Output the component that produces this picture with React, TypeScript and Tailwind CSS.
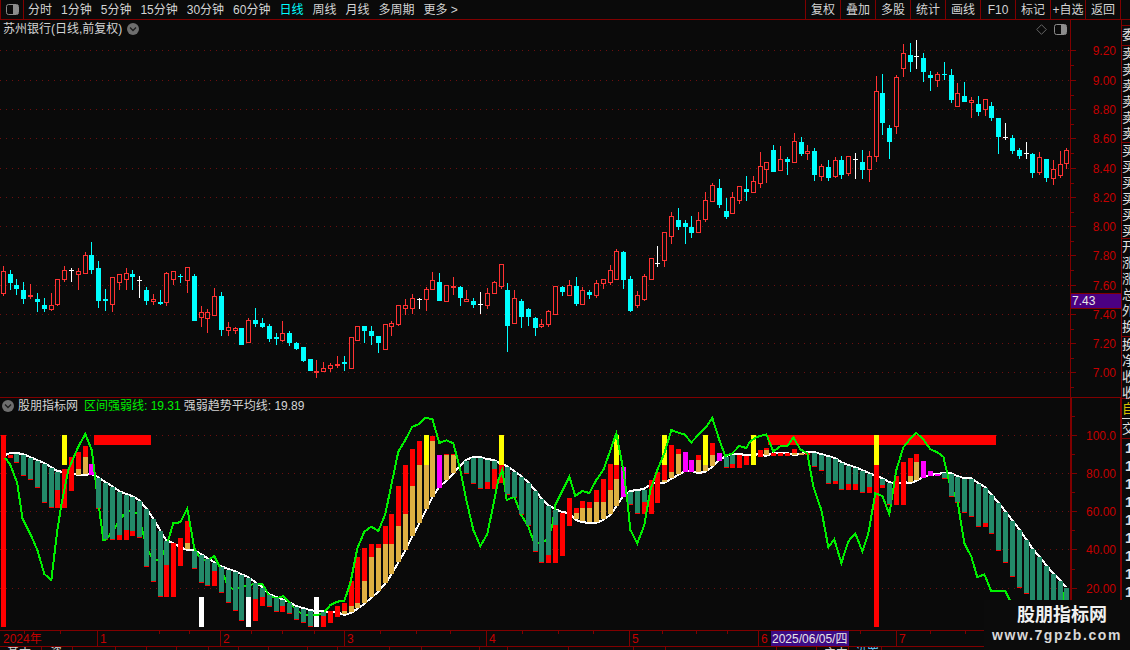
type Candle = [number, number, number, number, string]

// y values read from the picture at 3x, one block per crop
const candlesA: Candle[] = [
  [138,153,221,228,'r'],[150,162,189,210,'c'],[177,195,207,225,'c'],[186,210,237,252,'c'],[192,225,231,237,'r'],
  [219,237,246,276,'c'],[234,255,267,276,'c'],[219,255,270,273,'r'],[177,177,255,258,'r'],[138,150,180,186,'r'],
  [144,150,153,186,'w'],[144,153,165,210,'r'],[96,105,162,162,'r'],[66,105,150,162,'c'],[123,144,243,264,'c'],
  [207,237,243,273,'c'],[171,171,255,276,'r'],[162,162,189,210,'r'],[144,159,180,210,'r'],[150,162,171,210,'c'],
  [168,180,183,234,'w'],[201,210,243,255,'c'],[222,237,246,255,'r'],[210,246,252,255,'c'],[156,159,249,258,'r'],
  [153,153,180,195,'r'],[162,168,171,189,'c'],[141,141,183,219,'r'],[162,168,303,303,'c'],[258,276,294,321,'r'],
  [267,276,297,339,'r'],[204,228,288,288,'r'],[216,228,330,348,'c'],[306,321,333,348,'r'],[321,324,333,342,'r'],
  [324,324,375,375,'c'],[294,300,369,369,'r'],[264,300,312,321,'c'],[294,309,321,324,'c'],[312,318,357,366,'c'],
  [339,351,357,375,'c'],[303,339,363,366,'r'],[333,339,369,378,'c'],[366,369,387,390,'c'],[381,381,423,426,'c'],
  [417,417,453,453,'c'],[420,453,459,474,'r'],[426,444,456,456,'r'],[429,435,447,456,'r'],[408,432,438,444,'r'],
  [408,426,432,453,'c'],[351,351,447,447,'r'],[318,318,363,363,'r'],[318,318,333,369,'c'],[318,333,348,375,'c'],
  [348,348,369,399,'c'],[312,312,390,390,'r'],[303,309,321,348,'r'],[255,255,315,318,'r'],[237,255,267,285,'r'],
  [222,234,267,282,'r'],[234,237,240,267,'w'],[201,207,240,273,'r'],[156,180,210,210,'r'],[159,186,243,243,'c'],
  [195,195,246,246,'r'],[171,198,204,225,'r'],[198,201,234,258,'c'],[210,237,246,246,'r'],[234,243,255,264,'c'],
  [216,252,255,282,'w'],[204,219,258,267,'r'],[183,186,222,222,'r'],[132,132,201,207,'r'],[189,210,318,396,'c'],
  [210,234,312,312,'r'],[237,243,291,324,'c'],[264,267,291,318,'c'],[291,294,324,348,'c'],[297,312,321,324,'r'],
  [270,273,315,321,'r'],[198,198,285,285,'r'],[198,201,216,228,'c'],[180,195,228,228,'r'],[171,198,252,258,'c'],
  [201,210,255,255,'r'],[210,216,225,237,'c'],[180,189,228,234,'r'],[177,177,192,207,'r'],[135,150,189,195,'r'],
  [87,93,180,180,'r'],[93,96,180,207,'c'],[168,177,273,276,'c'],[213,225,258,264,'r'],[162,168,240,243,'r'],
  [114,114,180,180,'r'],[78,129,132,141,'w'],[36,36,123,141,'r'],
]
const candlesB: Candle[] = [
  [212,216,237,244,'r'],[208,220,227,230,'c'],[220,223,227,244,'c'],[216,227,233,238,'c'],[212,220,233,233,'r'],
  [192,200,220,222,'r'],[183,185,202,202,'r'],[179,188,205,208,'c'],[198,211,217,219,'c'],[192,197,214,214,'r'],
  [186,186,201,204,'r'],[176,189,192,201,'c'],
]
const candlesC: Candle[] = [
  [529,544,579,579,'r'],[456,498,552,564,'r'],[486,486,510,549,'r'],[435,450,516,516,'c'],[438,477,513,513,'r'],
  [471,477,486,525,'c'],[399,423,489,489,'r'],[411,426,462,468,'c'],[435,453,462,480,'r'],[444,453,525,543,'c'],
  [492,498,531,543,'r'],[480,501,534,543,'c'],[471,480,531,534,'r'],[468,480,525,537,'c'],[468,468,522,528,'r'],
  [459,477,480,537,'w'],[450,486,510,537,'c'],[453,468,510,546,'r'],[228,273,471,486,'r'],[222,279,369,405,'c'],
  [375,384,426,477,'c'],[225,231,381,402,'r'],[132,159,207,231,'r'],[129,165,186,216,'c'],[120,168,171,207,'w'],
  [159,174,216,246,'c'],[213,225,234,273,'c'],[216,222,243,261,'r'],[186,222,225,240,'c'],[207,225,300,309,'c'],
  [249,279,321,321,'r'],[246,288,306,306,'c'],[291,300,309,354,'r'],[288,312,336,348,'c'],[297,297,330,348,'r'],
  [306,318,354,363,'c'],[354,354,411,462,'c'],[369,411,414,420,'w'],[405,414,453,462,'c'],[444,450,468,477,'c'],
  [426,459,462,477,'w'],[459,462,519,534,'c'],[456,471,519,525,'r'],[477,477,534,546,'c'],[480,507,537,555,'r'],
  [453,492,528,534,'r'],[444,450,492,507,'r'],
]

const toPx = (list: Candle[], off: number, div: number): Candle[] =>
  list.map(([a, b, c, d, t]) => [Math.round(a / div + off), Math.round(b / div + off), Math.round(c / div + off), Math.round(d / div + off), t])

const candles: Candle[] = [...toPx(candlesA, 220, 3), ...candlesB, ...toPx(candlesC, 0, 3)]

// start y, then colour + end y. t teal, r red, o orange, m magenta, y yellow, w white, _ gap
const bars = [
  '136 r711','195 r204','192 t216 r219','195 t255 r258','204 t267 r270','213 t291 r294','222 t336 r339','234 t351 r354',
  '246 t300 r354','136 y225 _237 r354','201 r303','186 r237 o255','168 r201 o252','222 m255','264 t354 r357','279 t447 r450',
  '291 t447 r450','306 t435 r450','315 t420 r450','321 t423 r438','333 t441 r444','357 t528 r531','387 t573 r576','423 t618 r621',
  '453 t525 r621','459 r621','444 r528','393 r459 o477','483 t534 r537','495 t576 r579 _621 w711','507 t585 r588','519 t543 r588',
  '531 t606 r609','540 t636 r639','546 t660 r663','555 t690 r693','564 t621 w711','579 t627 r693','594 t621 r648','615 t648 r651',
  '624 t663 r666','630 t648 r666','639 t669 r672','651 t687 r690','657 t696 r699','663 t708 r711','621 w711','666 t678 r711',
  '663 r699','648 r681','639 r663 o672','573 r648 o666','501 r639 o654','474 r573 o639','462 r501 o621','462 r474 o603',
  '408 r462 o579','372 r462 o552','288 r408 o516','225 r372 o480','177 r288 o438','153 r225 o399','136 y225 o357','138 r153 o321',
  '195 m294','192 r195 o270','192 r195 o249','','213 t249 r252','204 t279 r282','204 t294 r297','210 t276 r297',
  '213 t237 r297','136 y225 r279','231 t312 r315','246 t321 r324','261 t372 r375','279 t405 r408','303 t483 r486','327 t516 r519',
  '348 t495 r519','360 t405 r519','369 r498','324 r408','354 r369 o387','333 r354 o393','336 r354 o396','300 r336 o396',
  '267 r336 o387','222 r300 o372','136 y225 r267 o348','231 m321','306 t342 r345','303 t369 r372','300 t336 r372','270 r372',
  '246 r339','136 y225 r270 o276','165 r246 o264','177 r192 o252','186 m246','210 m246','195 r210 o246','136 y225 o243',
  '159 r195 o228','189 m213','201 t231 r234','195 t222 r234','195 r234','198 r225','136 y225','180 r201',
  '174 r180 o195','189 r198','189 r198','189 r198','177 r189 o195','189 o195','189 r195','189 t228 r231',
  '195 t240 r243','201 t279 r282','207 t273 r282','219 t297 r300','228 t282 r300','234 t282 r300','243 t306 r309','252 t291 r309',
  '136 y225 r711','267 t285 r294','279 t342 r345','258 r345','216 r345','204 r258 o276','192 r216 o270','213 m264',
  '243 m258','252 m258','249 t264 r267','252 t318 r321','261 t336 r339','267 t366 r369','267 t378 r381','282 t408 r411',
  '294 t399 r411','315 t429 r432','339 t480 r483','366 t516 r519','393 t558 r561','420 t591 r594','450 t609 r612','477 t690 r693',
  '501 t690 r693','528 t690 r693','552 t690 r693','573 t690 r693','594 t690 r693',
]

const curve = [
  200,192,192,195,204,213,222,234,246,250,252,252,252,255,264,279,291,306,315,321,333,357,387,423,453,462,474,477,483,495,507,519,
  531,540,546,555,564,579,594,615,624,630,639,651,657,663,666,666,669,669,672,666,654,639,621,603,579,552,516,480,438,399,357,321,
  294,270,249,231,213,204,204,210,213,225,231,246,261,279,303,327,348,360,369,372,387,393,396,396,387,372,348,321,306,303,300,285,
  282,276,264,252,246,246,246,243,228,213,201,195,195,198,198,195,195,192,192,192,192,189,189,189,195,201,207,219,228,234,243,252,
  261,267,279,285,279,276,270,264,258,255,252,252,261,267,267,282,294,315,339,366,393,420,450,477,501,528,552,573,594,
]

const greenA = [[15,204],[30,222],[52,280],[67,384],[91,432],[112,480],[133,552],[154,570],[172,420],[185,340],[205,240],[235,170],[256,132],[275,180],[283,240],[290,300],[310,450],[316,451],[340,420],[370,375],[385,362],[415,370],[440,475],[460,510],[480,510],[499,470],[520,399],[541,397],[562,356],[583,475],[604,510],[625,510],[643,498],[664,540],[685,590],[706,600],[724,590],[745,585],[766,582],[787,582],[808,618],[829,625],[850,618],[870,640],[889,660],[910,675],[949,676],[970,670],[991,645],[1012,635],[1033,632],[1051,580],[1072,475],[1093,425]]
const greenB = [[4,410],[25,423],[46,372],[64,285],[85,185],[106,150],[127,110],[148,102],[166,84],[187,87],[208,159],[229,151],[250,160],[271,240],[289,330],[310,420],[331,468],[352,432],[373,330],[385,270],[397,240],[410,330],[433,320],[454,375],[475,410],[493,460],[514,460],[535,445],[547,405],[556,345],[598,260],[616,318],[637,303],[658,309],[679,270],[700,240],[718,190],[739,130],[760,240],[772,330],[781,420],[802,460],[823,405],[841,300],[862,240],[883,190],[904,120],[925,128],[943,133],[964,157],[985,135],[1006,114],[1027,84],[1048,150],[1066,198],[1087,190],[1108,168],[1129,174],[1140,155]]
const greenC = [[20,141],[49,133],[70,185],[91,169],[112,169],[130,142],[151,178],[172,190],[190,290],[214,360],[235,472],[253,448],[274,519],[295,454],[316,430],[337,484],[355,430],[376,310],[397,318],[418,372],[439,240],[460,172],[478,150],[499,129],[520,148],[541,178],[562,187],[580,200],[601,290],[622,330],[643,460],[664,500],[682,562],[703,553],[724,604],[745,604],[766,604],[785,640],[860,700],[925,680],[945,600]]

const greenPoints = [
  ...greenA.map(([x, y]) => `${x / 3},${y / 3 + 390}`),
  ...greenB.map(([x, y]) => `${x / 3 + 370},${y / 3 + 390}`),
  ...greenC.map(([x, y]) => `${x / 3 + 750},${y / 3 + 390}`),
].join(' ')

const barColor: Record<string, string> = { t: '#238a69', r: '#ff0000', o: '#deaf42', m: '#ff00ff', y: '#ffff00', w: '#ffffff' }

const colX = (i: number) => Math.floor(3.3 + 6.818 * i)
const zy = (z: number) => Math.round(z / 3) + 390

// the white line sits above teal bars and below orange ones
const curvePoints = curve.map((y, i) => `${colX(i)},${zy(y) + (bars[i].includes('o') ? 1 : -1)}`).join(' ')

const priceTicks = [
  ['9.20', 50], ['9.00', 80], ['8.80', 109], ['8.60', 138], ['8.40', 168], ['8.20', 197],
  ['8.00', 226], ['7.80', 255], ['7.60', 285], ['7.40', 314], ['7.20', 343], ['7.00', 372],
] as const
const indTicks = [['100.0', 435], ['80.00', 473], ['60.00', 511], ['40.00', 549], ['20.00', 588]] as const

const periods = ['分时', '1分钟', '5分钟', '15分钟', '30分钟', '60分钟', '日线', '周线', '月线', '多周期', '更多 >']
const tools = ['复权', '叠加', '多股', '统计', '画线', 'F10', '标记', '+自选', '返回']

const tabs = [
  { label: '基本', cls: 'w-[42px] pl-[7px]' }, { label: '资', cls: 'w-[31px] pl-[8px]' }, { label: '', cls: 'w-[43px]' },
  { label: '', cls: 'w-[31px]' }, { label: '', cls: 'w-[30px]' }, { label: '', cls: 'w-[32px]' }, { label: '', cls: 'w-[30px]' },
  { label: '', cls: 'w-[30px]' }, { label: '', cls: 'w-[39px]' }, { label: '', cls: 'w-[30px]' }, { label: '', cls: 'w-[52px]' },
  { label: '', cls: 'w-[32px]' }, { label: '', cls: 'w-[58px]' }, { label: '', cls: 'w-[28px]' }, { label: '', cls: 'w-[61px]' },
  { label: '', cls: 'w-[65px]' }, { label: '', cls: 'w-[32px]' }, { label: '', cls: 'w-[111px]' }, { label: '', cls: 'w-[40px]' },
  { label: '主力', cls: 'w-[32px] pl-[7px]' }, { label: '设置', cls: 'w-[33px] pl-[6px] text-[#66ccff]' },
]

function PanelIcon() {
  return (
    <svg width="13" height="11" viewBox="0 0 13 11">
      <rect x="0.5" y="0.5" width="12" height="10" rx="2" fill="#0a0a0a" stroke="#8c8c8c" />
      <rect x="7" y="1" width="5" height="9" fill="#8c8c8c" />
    </svg>
  )
}

function Chevron() {
  return (
    <svg width="12" height="12" viewBox="0 0 12 12">
      <circle cx="6" cy="6" r="6" fill="#6e6e6e" />
      <path d="M3 4.5 L6 7.5 L9 4.5" fill="none" stroke="#1c1c1c" strokeWidth="1.3" />
    </svg>
  )
}

function Candles() {
  return (
    <>
      {candles.map(([hi, top, bot, lo, t], i) => {
        const x = colX(i)
        const color = t === 'r' ? '#ff3232' : t === 'c' ? '#00ffff' : '#ffffff'
        const hollow = t === 'r' && bot - top >= 3
        const h = Math.max(bot - top, 1)
        return (
          <g key={i} shapeRendering="crispEdges">
            <rect x={x} y={hi} width="1" height={Math.max(top - hi, 0)} fill={color} />
            <rect x={x} y={bot} width="1" height={Math.max(lo - bot, 0)} fill={color} />
            {hollow ? (
              <rect x={x - 1.5} y={top + 0.5} width="4" height={h - 1} fill="#0a0a0a" stroke={color} />
            ) : (
              <rect x={x - 2} y={top} width="5" height={h} fill={color} />
            )}
          </g>
        )
      })}
    </>
  )
}

function Bars({ teal }: { teal: boolean }) {
  return (
    <>
      {bars.flatMap((bar, i) => {
        if (!bar) return []
        const parts = bar.split(' ')
        let y = Number(parts[0])
        return parts.slice(1).map((p, j) => {
          const key = p[0]
          const end = Number(p.slice(1))
          const from = y
          y = end
          if (key === '_' || (key === 't') !== teal) return null
          return <rect key={`${i}-${j}`} x={colX(i) - 2} y={zy(from)} width="5" height={zy(end) - zy(from)} fill={barColor[key]} />
        })
      })}
    </>
  )
}

function GridLines({ ys }: { ys: readonly number[] }) {
  return (
    <>
      {ys.map((y) => (
        <line key={y} x1="0" x2="1070" y1={y + 0.5} y2={y + 0.5} stroke="#6e0f0f" strokeDasharray="1 5" />
      ))}
    </>
  )
}

function PriceAxis() {
  return (
    <svg width="50" height="377" viewBox="1071 20 50 377" className="block">
      {priceTicks.map(([label, y]) => (
        <g key={label}>
          <rect x="1071" y={y} width="5" height="1" fill="#800000" />
          <rect x="1071" y={y + 15} width="3" height="1" fill="#800000" />
          <text x="1116" y={y + 5} textAnchor="end" fontSize="12" fill="#c40000">{label}</text>
        </g>
      ))}
    </svg>
  )
}

function IndicatorAxis() {
  return (
    <svg width="48" height="232" viewBox="1072 398 48 232" className="block">
      {indTicks.map(([label, y]) => (
        <g key={label}>
          <rect x="1072" y={y} width="5" height="1" fill="#800000" />
          <rect x="1072" y={y - 19} width="3" height="1" fill="#800000" />
          <text x="1116" y={y + 5} textAnchor="end" fontSize="12" fill="#c40000">{label}</text>
        </g>
      ))}
    </svg>
  )
}

function TimeAxis() {
  const months = [[97, '1'], [220, '2'], [344, '3'], [486, '4'], [629, '5'], [758, '6'], [896, '7']] as const
  const small = [24, 60, 159, 189, 251, 282, 314, 380, 416, 450, 522, 558, 593, 662, 696, 727, 800, 860, 930, 965]
  return (
    <svg width="1122" height="17" viewBox="0 630 1122 17" className="block">
      <rect x="0" y="630" width="1122" height="1" fill="#800000" />
      <rect x="0" y="646" width="1122" height="1" fill="#800000" />
      {small.map((x) => <rect key={x} x={x} y="631" width="1" height="3" fill="#800000" />)}
      <text x="3" y="643" fontSize="12" fill="#c40000">2024年</text>
      {months.map(([x, m]) => (
        <g key={m}>
          <rect x={x} y="631" width="1" height="15" fill="#800000" />
          <text x={x + 3} y="643" fontSize="12" fill="#c40000">{m}</text>
        </g>
      ))}
      <rect x="771" y="631" width="78" height="15" fill="#3d0b85" />
      <text x="772" y="643" fontSize="12" fill="#e8e8e8">2025/06/05/四</text>
    </svg>
  )
}

function StripRows({ chars, rowClass }: { chars: string; rowClass: string }) {
  return (
    <>
      {[...chars].map((c, i) => (
        <div key={i} className={rowClass}>{c}</div>
      ))}
    </>
  )
}

function RightStrip() {
  return (
    <div className="w-[8px] flex flex-col overflow-hidden text-[#e0e0e0] text-[13px] whitespace-nowrap">
      <div className="h-[6px] shrink-0 border-b border-[#800000]" />
      <div className="h-[20px] shrink-0 border-b border-[#800000] leading-[18px]">委</div>
      <div className="h-[97px] shrink-0 border-b border-[#800000]">
        <StripRows chars="卖卖卖卖卖卖" rowClass="h-[16px] leading-[16px]" />
      </div>
      <div className="h-[96px] shrink-0 border-b border-[#800000]">
        <StripRows chars="买买买买买买" rowClass="h-[16px] leading-[16px]" />
      </div>
      <div className="h-[98px] shrink-0 border-b border-[#800000]">
        <StripRows chars="开涨涨总外换" rowClass="h-[16px] leading-[16px]" />
      </div>
      <div className="h-[62px] shrink-0 border-b border-[#800000]">
        <StripRows chars="换净收收" rowClass="h-[16px] leading-[16px]" />
      </div>
      <div className="h-[20px] shrink-0 border-b border-[#d8d8d8] text-[#d8c000] leading-[20px]">自</div>
      <div className="h-[20px] shrink-0 border-b border-[#800000] leading-[19px]">交</div>
      <StripRows chars="111111111" rowClass="h-[18px] shrink-0 leading-[18px] pl-[3px] text-[15px] font-bold" />
    </div>
  )
}

export default function App() {
  return (
    <div className="relative w-[1130px] h-[650px] overflow-hidden flex flex-col bg-[#0a0a0a] text-[12px] text-[#d4d4d4] [font-family:'Liberation_Sans','Noto_Sans_CJK_SC',sans-serif]">
      {/* top toolbar */}
      <div className="h-[20px] shrink-0 flex items-center border-b border-[#800000]">
        <div className="w-[24px] h-full flex items-center justify-center border-x border-[#800000]">
          <PanelIcon />
        </div>
        <div className="flex items-center gap-[9px] ml-[4px]">
          {periods.map((p) => (
            <span key={p} className={p === '日线' ? 'text-[#00ffff]' : ''}>{p}</span>
          ))}
        </div>
        <div className="ml-auto mr-[9px] h-full flex border-r border-[#800000]">
          {tools.map((t) => (
            <div key={t} className="w-[35px] h-full flex items-center justify-center border-l border-[#800000]">{t}</div>
          ))}
        </div>
      </div>

      <div className="flex-1 flex min-h-0">
        <div className="w-[1122px] flex flex-col">
          {/* price pane */}
          <div className="h-[377px] flex">
            <div className="relative w-[1070px]">
              <svg width="1070" height="377" viewBox="0 20 1070 377" className="block">
                <GridLines ys={priceTicks.map((t) => t[1])} />
                <Candles />
              </svg>
              <div className="absolute top-0 left-[3px] h-[18px] flex items-center gap-[5px]">
                <span>苏州银行(日线,前复权)</span>
                <Chevron />
              </div>
              <div className="absolute top-[4px] right-[3px] flex items-center gap-[7px]">
                <svg width="11" height="11" viewBox="0 0 11 11">
                  <path d="M5.5 0.7 L10.3 5.5 L5.5 10.3 L0.7 5.5 Z" fill="none" stroke="#666666" />
                </svg>
                <PanelIcon />
              </div>
            </div>
            <div className="relative w-[52px] border-x border-[#800000]">
              <PriceAxis />
              <div className="absolute top-[273px] left-0 right-0 h-[16px] leading-[15px] pl-[1px] bg-[#4b0082] border-y border-[#800000] text-[#e8e8e8]">7.43</div>
            </div>
          </div>

          {/* indicator pane */}
          <div className="h-[233px] flex border-t border-[#800000]">
            <div className="relative w-[1070px]">
              <svg width="1070" height="232" viewBox="0 398 1070 232" className="block">
                <GridLines ys={indTicks.map((t) => t[1])} />
                <polyline points={curvePoints} fill="none" stroke="#ffffff" strokeWidth="2" shapeRendering="crispEdges" />
                <g shapeRendering="crispEdges">
                  <rect x="94" y="435" width="57" height="10" fill="#ff0000" />
                  <rect x="768" y="435" width="228" height="10" fill="#ff0000" />
                  <Bars teal={false} />
                </g>
                <polyline points={greenPoints} fill="none" stroke="#00f000" strokeWidth="2" shapeRendering="crispEdges" />
                <g shapeRendering="crispEdges">
                  <Bars teal={true} />
                </g>
              </svg>
              <div className="absolute top-0 left-[2px] h-[16px] flex items-center">
                <Chevron />
                <span className="ml-[4px]">股朋指标网</span>
                <span className="ml-[6px] text-[#00f000]">区间强弱线: 19.31</span>
                <span className="ml-[3px]">强弱趋势平均线: 19.89</span>
              </div>
            </div>
            <div className="w-[52px] border-x-2 border-[#800000]">
              <IndicatorAxis />
            </div>
          </div>

          <TimeAxis />
          {/* bottom tab strip, cut by the window edge */}
          <div className="h-[3px] flex overflow-hidden">
            {tabs.map((t, i) => (
              <div key={i} className={`${t.cls} shrink-0 h-[14px] leading-[12px] border-r border-[#800000] whitespace-nowrap`}>{t.label}</div>
            ))}
          </div>
        </div>
        <RightStrip />
      </div>

      {/* site watermark over the corner */}
      <div className="absolute right-0 bottom-0 w-[146px] h-[50px] bg-[#0b0b0b] flex flex-col items-center pt-[3px]">
        <span className="text-[18px] leading-[24px] font-bold text-[#f0f0f0] ml-[10px]">股朋指标网</span>
        <span className="text-[14px] leading-[16px] font-bold tracking-[1.6px] text-[#d8d8d8]">www.7gpzb.com</span>
      </div>
    </div>
  )
}
